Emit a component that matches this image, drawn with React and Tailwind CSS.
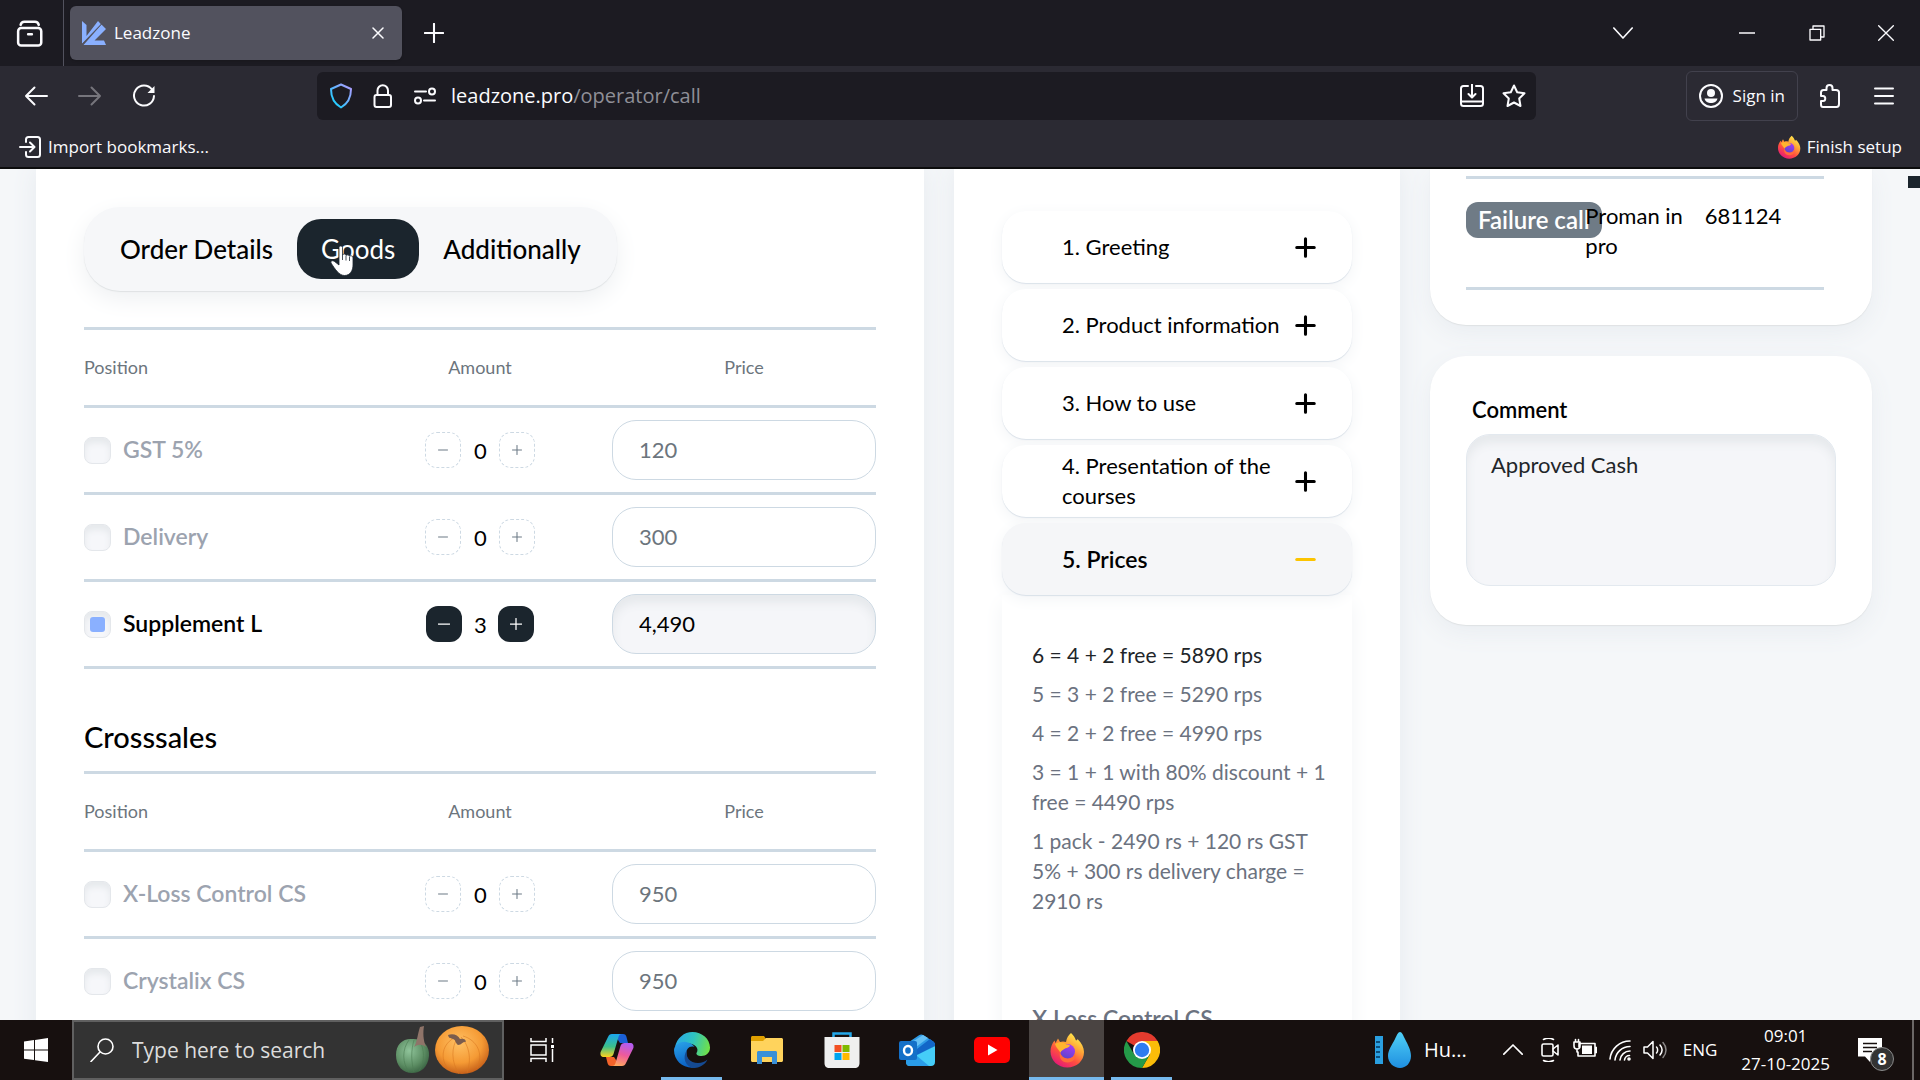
import React from "react";

const goods = [
  { name: "GST 5%", amount: 0, price: "120" },
  { name: "Delivery", amount: 0, price: "300" },
  { name: "Supplement L", amount: 3, price: "4,490" },
];

const crosssales = [
  { name: "X-Loss Control CS", amount: 0, price: "950" },
  { name: "Crystalix CS", amount: 0, price: "950" },
];

const script = [
  "1. Greeting",
  "2. Product information",
  "3. How to use",
  "4. Presentation of the courses",
  "5. Prices",
];

const prices = [
  "5 = 3 + 2 free = 5290 rps",
  "4 = 2 + 2 free = 4990 rps",
  "3 = 1 + 1 with 80% discount + 1 free = 4490 rps",
  "1 pack - 2490 rs + 120 rs GST 5% + 300 rs delivery charge = 2910 rs",
];

/* ---------- icons ---------- */

function Line({ size = 24, width = 2, className = "", children }) {
  return (
    <svg
      width={size}
      height={size}
      viewBox="0 0 24 24"
      fill="none"
      stroke="currentColor"
      strokeWidth={width}
      strokeLinecap="round"
      strokeLinejoin="round"
      className={`shrink-0 ${className}`}
      aria-hidden="true"
    >
      {children}
    </svg>
  );
}

function FirefoxLogo({ size = 24, id }) {
  return (
    <svg width={size} height={size} viewBox="0 0 36 36" className="shrink-0" aria-hidden="true">
      <defs>
        <linearGradient id={`${id}-body`} x1="0.85" y1="0.05" x2="0.25" y2="1">
          <stop offset="0" stopColor="#fff44f" />
          <stop offset="0.35" stopColor="#ffa436" />
          <stop offset="0.65" stopColor="#ff4f3f" />
          <stop offset="1" stopColor="#e2147c" />
        </linearGradient>
        <linearGradient id={`${id}-globe`} x1="0.7" y1="0" x2="0.3" y2="1">
          <stop offset="0" stopColor="#a83bf5" />
          <stop offset="1" stopColor="#5b45c9" />
        </linearGradient>
      </defs>
      <path
        fill={`url(#${id}-body)`}
        d="M22 1c3 2.500 4 5 5 7.500 1-.2 1.500-1 1.500-1.500C32.500 11 35 15.500 35 20c0 9-7.500 15.500-16.700 15.500S1.500 28.500 1.500 19.500c0-4.500 1.700-8 4-11L6.500 11 9 6.500l2 3.500c2-.8 4-.8 6 0 .5-4 2.500-7 5-9z"
      />
      <circle cx="18.500" cy="19.500" r="7.500" fill={`url(#${id}-globe)`} />
      <path
        fill="#ffb52e"
        d="M6 12c4-2.500 8-2 11.500.5 1.500 0 3 .5 3.500 1.200-1 1.800-3 2.300-4.500 2.500-2 1.800-4.500 2-5 4.500-1.800-3-4.500-5-5.500-8.700z"
      />
      <path fill="#ff6b3a" d="M11 20c1 5 6 7.500 10.500 6 2.500-.8 4-2.500 4.500-4.500 1.500 5-2 9-7.500 9S9.500 26 11 20z" />
    </svg>
  );
}

function LeadzoneLogo() {
  return (
    <svg width="24" height="24" viewBox="0 0 24 24" fill="#8ab0ff" className="shrink-0" aria-hidden="true">
      <path d="M0 0l4.500 4v11L16 0l3 3.200L0 23z" />
      <path d="M19.500 3.500L24 8 12.500 19.500 22 19.500 24 24H1.500z" />
      <path d="M0 23L19.500 3" stroke="#52525e" strokeWidth="0.800" />
    </svg>
  );
}

function WindowsLogo() {
  return (
    <svg width="24" height="24" viewBox="0 0 24 24" fill="#fff" aria-hidden="true">
      <path d="M0 3.400l10-1.400v9.600H0zM11 1.900L24 0v11.600H11zM0 12.500h10v9.600L0 20.700zM11 12.500h13V24l-13-1.800z" />
    </svg>
  );
}

function Pumpkins() {
  return (
    <svg width="96" height="50" viewBox="0 0 96 50" className="shrink-0" aria-hidden="true">
      <defs>
        <radialGradient id="gourd" cx="0.4" cy="0.35" r="0.75">
          <stop offset="0" stopColor="#8fc49a" />
          <stop offset="0.6" stopColor="#5c8d63" />
          <stop offset="1" stopColor="#31583a" />
        </radialGradient>
        <radialGradient id="pumpkin" cx="0.45" cy="0.35" r="0.7">
          <stop offset="0" stopColor="#ffc164" />
          <stop offset="0.6" stopColor="#f59a34" />
          <stop offset="1" stopColor="#bc5414" />
        </radialGradient>
      </defs>
      <path d="M2 30C2 19 9 13 19 14c10 0 17 7 16 17-1 11-8 17-17 17S2 41 2 30z" fill="url(#gourd)" />
      <path d="M15 15C8 24 8 38 15 47M20 15c-3 10-3 22 0 32M25 15c6 9 6 22 0 31" stroke="#4c7d54" strokeOpacity="0.6" fill="none" />
      <path d="M20 22c3-4 4-15 6-20l4-1c-1 6-1 14 2 21-4-3-8-3-12 0z" fill="#8f7469" />
      <ellipse cx="68" cy="25" rx="27" ry="24" fill="url(#pumpkin)" />
      <path
        d="M62 12C48 18 45 34 55 45M64 12c-7 10-7 25 1 37M67 12c8 8 11 22 6 36M69 11c14 4 21 18 14 32"
        stroke="#d8771f"
        strokeOpacity="0.55"
        fill="none"
      />
      <path d="M54 10c5-2 10 0 12 4 3-1 6 0 6 3-3-1-4 3-8 3-3-2-2-5-5-6-2-1-4 0-5-4z" fill="#7a5c4d" />
    </svg>
  );
}

function TaskViewIcon() {
  return (
    <svg width="24" height="24" viewBox="0 0 24 24" fill="none" stroke="#fff" strokeWidth="1.500" aria-hidden="true">
      <path d="M1 0v3.500h15V0M1 24v-3.500h15V24M1 7h15v10H1zM22.500 0v5M22.500 11v13" />
      <path d="M21 7h3v3h-3z" fill="#fff" stroke="none" />
    </svg>
  );
}

function CopilotLogo() {
  return (
    <svg width="34" height="32" viewBox="0 0 34 32" aria-hidden="true">
      <defs>
        <linearGradient id="cop-a" x1="0" y1="0" x2="0" y2="1">
          <stop offset="0" stopColor="#1aa7f0" />
          <stop offset="0.55" stopColor="#3cbf8a" />
          <stop offset="1" stopColor="#ffd21e" />
        </linearGradient>
        <linearGradient id="cop-b" x1="0.6" y1="0" x2="0.3" y2="1">
          <stop offset="0" stopColor="#b35cf0" />
          <stop offset="0.5" stopColor="#ee5a9a" />
          <stop offset="1" stopColor="#ffa95e" />
        </linearGradient>
      </defs>
      <path d="M14 0h9c2 0 3 1 3.500 3l1.500 6h-8z" fill="#1b5fd6" />
      <path d="M20 32h-9c-2 0-3-1-3.500-3L6 23h8z" fill="#f4632a" />
      <path d="M8 3c.8-2 2-3 4-3h10c-2 0-3 1-3.500 3l-5 17c-.6 2-2 3-4 3H4c-3 0-4-2-3.400-5z" fill="url(#cop-a)" />
      <path d="M26 29c-.8 2-2 3-4 3H12c2 0 3-1 3.500-3l5-17c.6-2 2-3 4-3H30c3 0 4 2 3.400 5z" fill="url(#cop-b)" />
    </svg>
  );
}

function EdgeLogo() {
  return (
    <svg width="36" height="36" viewBox="0 0 36 36" aria-hidden="true">
      <defs>
        <linearGradient id="edge-a" x1="0" y1="0.3" x2="1" y2="0.5">
          <stop offset="0" stopColor="#2aa8e8" />
          <stop offset="0.5" stopColor="#2fc3c0" />
          <stop offset="1" stopColor="#6fe04a" />
        </linearGradient>
        <linearGradient id="edge-b" x1="0" y1="0" x2="0.3" y2="1">
          <stop offset="0" stopColor="#2aa4ea" />
          <stop offset="1" stopColor="#0c62c4" />
        </linearGradient>
      </defs>
      <path d="M1 15C3 6 10 0 18.500 0 28 0 36 7 36 15.500 36 21 32 24 27.500 24c-4 0-5.500-1.500-5-3 3-4-1-9.500-8-9.500C8 11.500 3 13 1 15z" fill="url(#edge-a)" />
      <path d="M0 18c.5-5 6-9 12-8 4 .5 7 2.500 8.500 5C14 13 11 19 13 25c1.500 5 5 9 10 10C11 38 0 30 0 18z" fill="url(#edge-b)" />
      <path d="M13 18c-2 7 3 13 11 13 4 0 7-1.500 9.500-3.500C31 33 25 36 20 36 11 35 8 25 13 18z" fill="#154a92" />
    </svg>
  );
}

function ExplorerLogo() {
  return (
    <svg width="32" height="28" viewBox="0 0 32 28" aria-hidden="true">
      <path d="M0 1.500C0 .7.700 0 1.500 0H13l2 3v4H0z" fill="#e0a000" />
      <path d="M0 5h12l3-3h15.500c.8 0 1.500.7 1.500 1.500v21c0 .8-.7 1.500-1.500 1.500h-29C.7 26 0 25.300 0 24.500z" fill="#ffd35c" />
      <path d="M6 28V16.500c0-1 .8-1.500 1.500-1.500h17c.8 0 1.500.5 1.500 1.500V28h-5v-7H11v7z" fill="#3a90d8" />
    </svg>
  );
}

function StoreLogo() {
  return (
    <svg width="36" height="36" viewBox="0 0 36 36" aria-hidden="true">
      <path d="M9.500 7V1.500h17V7" fill="none" stroke="#24a8ea" strokeWidth="2.500" />
      <path d="M.5 5h35v26c0 3-1.500 5-5 5h-25c-3.500 0-5-2-5-5z" fill="#efefef" />
      <path d="M10.500 13h7v7h-7z" fill="#f25022" />
      <path d="M18.500 13h7v7h-7z" fill="#7fba00" />
      <path d="M10.500 21h7v7h-7z" fill="#00a4ef" />
      <path d="M18.500 21h7v7h-7z" fill="#ffb900" />
    </svg>
  );
}

function OutlookLogo() {
  return (
    <svg width="36" height="32" viewBox="0 0 36 32" aria-hidden="true">
      <path d="M7 10L20 1.200c1.500-1 3-1 4.500 0L35 8v4L18 22 7 15z" fill="#2f9be6" />
      <path d="M10 10L24 1l5 3-16 12z" fill="#64c0f5" />
      <path d="M14 18L31 5l5 4v3L20 22z" fill="#1266c8" />
      <path d="M36 12v16c0 2.500-1.500 4-4 4H11c-2 0-4-1-4-4l11-7z" fill="#45cdf8" />
      <path d="M7 21l11 1 12 10H11c-2 0-4-1-4-4z" fill="#2a9ce8" />
      <rect y="7" width="18" height="19" rx="2" fill="#1470c8" />
      <ellipse cx="9" cy="16.500" rx="4" ry="4.500" fill="none" stroke="#fff" strokeWidth="2.400" />
    </svg>
  );
}

function YoutubeLogo() {
  return (
    <svg width="36" height="26" viewBox="0 0 36 26" aria-hidden="true">
      <rect width="36" height="26" rx="5" fill="#f00" />
      <path d="M14 7.500v11l9.500-5.500z" fill="#fff" />
    </svg>
  );
}

function ChromeLogo() {
  return (
    <svg width="36" height="36" viewBox="0 0 36 36" aria-hidden="true">
      <path d="M18 18L2.400 9A18 18 0 0 1 33.600 9z" fill="#e33b2e" />
      <path d="M18 9h15.600A18 18 0 0 1 18 36l7.800-13.500z" fill="#fbbc09" />
      <path d="M2.400 9l7.800 13.500L18 27l7.800-4.500L18 36A18 18 0 0 1 2.400 9z" fill="#249a48" />
      <circle cx="18" cy="18" r="9" fill="#fff" />
      <circle cx="18" cy="18" r="7.200" fill="#2f7cf0" />
    </svg>
  );
}

function HandCursor() {
  return (
    <svg width="24" height="32" viewBox="0 0 24 32" aria-hidden="true">
      <path
        d="M9 2.500C9 .5 12.500.5 12.500 2.500V10c.5-1.500 3.300-1.300 3.500.5.800-1.200 3.300-.8 3.500.8 1-1 3.500-.5 3.500 1.500V20c0 5-2.500 10.500-8.500 10.500C9 30.500 5 24 1 18c-.8-2 1.500-3 3.200-1.800L9 20z"
        fill="#fff"
        stroke="#1b252d"
        strokeWidth="0.800"
      />
      <path d="M12.500 10v5M16 11v4.500M19.500 12v4" stroke="#1b252d" strokeWidth="0.800" />
    </svg>
  );
}

/* ---------- browser chrome ---------- */

function TabStrip() {
  return (
    <div className="flex h-[66px] items-center bg-[#1c1b22]">
      <button className="flex w-[63px] justify-center pr-1" aria-label="Recent browsing">
        <Line size={30}>
          <rect x="2.500" y="8" width="18.500" height="14" rx="2.500" />
          <path d="M4.500 5.500c.5-2 1.500-2.500 3-2.500h8.500c1.500 0 2.500.5 3 2.500M10.500 13h3" />
        </Line>
      </button>
      <div className="h-full w-px bg-[#52525e]" />
      <div className="ml-1.5 flex h-[54px] w-[332px] items-center rounded-md bg-[#52525e] px-3 shadow">
        <LeadzoneLogo />
        <span className="ml-2 flex-1 text-[17px]">Leadzone</span>
        <button className="p-1.5" aria-label="Close tab">
          <Line size={12} width={3}>
            <path d="M2 2l20 20M22 2L2 22" />
          </Line>
        </button>
      </div>
      <button className="ml-[18px] p-1" aria-label="New tab">
        <Line size={20} width={2.5}>
          <path d="M12 1v22M1 12h22" />
        </Line>
      </button>
      <div className="ml-auto flex items-center pr-[26px]">
        <button className="mr-[106px]" aria-label="List all tabs">
          <Line size={20}>
            <path d="M1 6l11 12L23 6" />
          </Line>
        </button>
        <button className="mr-[54px]" aria-label="Minimize">
          <Line size={16}>
            <path d="M0 12h24" />
          </Line>
        </button>
        <button className="mr-[53px]" aria-label="Restore">
          <Line size={16}>
            <path d="M1.500 6.500h16v16h-16zM6 6V1.500h16.500V18h-4" />
          </Line>
        </button>
        <button aria-label="Close">
          <Line size={16}>
            <path d="M1 1l22 22M23 1L1 23" />
          </Line>
        </button>
      </div>
    </div>
  );
}

function NavBar() {
  return (
    <div className="flex h-[60px] items-center bg-[#2b2a33] px-6">
      <button aria-label="Back">
        <Line>
          <path d="M2 12h21M10.500 3.500L2 12l8.500 8.500" />
        </Line>
      </button>
      <button className="ml-[30px] text-[#76757c]" aria-label="Forward">
        <Line>
          <path d="M22 12H1M13.500 3.500L22 12l-8.500 8.500" />
        </Line>
      </button>
      <button className="ml-[30px]" aria-label="Reload">
        <Line>
          <path d="M20 5.500A10 10 0 1 0 22 12" />
          <path d="M22.500 2v7h-7z" fill="currentColor" stroke="none" />
        </Line>
      </button>
      <div className="ml-[161px] flex h-12 min-w-0 flex-1 items-center rounded-md bg-[#1c1b22] pr-2.5 pl-3">
        <svg width="24" height="26" viewBox="0 0 24 26" fill="none" aria-hidden="true">
          <defs>
            <linearGradient id="shield" x1="1" y1="0" x2="0" y2="1">
              <stop offset="0" stopColor="#b79bff" />
              <stop offset="0.5" stopColor="#5fb4ff" />
              <stop offset="1" stopColor="#00ddff" />
            </linearGradient>
          </defs>
          <path d="M12 1.500l10 4.500c0 8-3 14.500-10 18.500C5 20.500 2 14 2 6z" stroke="url(#shield)" strokeWidth="2" strokeLinejoin="round" />
        </svg>
        <Line className="ml-[18px]">
          <rect x="3.500" y="11" width="16.500" height="12" rx="2" />
          <path d="M6.500 11V6.500a5.200 5.200 0 0 1 10.500 0V11" />
        </Line>
        <Line className="ml-[18px]">
          <circle cx="19" cy="7.500" r="3" />
          <circle cx="5" cy="16.500" r="3" />
          <path d="M2 7.500h11M11 16.500h11" />
        </Line>
        <label className="relative ml-3.5 flex-1 text-[20px]">
          leadzone.pro<span className="text-[#8f8f97]">/operator/call</span>
          <input type="text" aria-label="Address" className="absolute inset-0 outline-none" />
        </label>
        <button aria-label="Install page">
          <Line>
            <path d="M8 2H3.500C2 2 1 3 1 4.500v15C1 21 2 22 3.500 22h17c1.500 0 2.500-1 2.500-2.500v-15C23 3 22 2 20.500 2H16M1 17.500h22M12 0v13M8.500 10l3.500 3.500L15.500 10" />
          </Line>
        </button>
        <button className="ml-[18px]" aria-label="Bookmark this page">
          <Line>
            <path d="M12 1.500l3.200 6.800 7.300 1-5.300 5.200 1.300 7.500L12 18.500 5.500 22l1.300-7.500L1.500 9.300l7.300-1z" />
          </Line>
        </button>
      </div>
      <button className="ml-[150px] flex h-[50px] items-center gap-2.5 rounded-md border border-[#42414d] px-3 text-[17px]">
        <Line>
          <circle cx="12" cy="12" r="11" />
          <circle cx="12" cy="9" r="4" fill="currentColor" stroke="none" />
          <path d="M5.500 14.500h13c-1 3.500-3.500 4.500-6.500 4.500s-5.500-1-6.500-4.500z" fill="currentColor" stroke="none" />
        </Line>
        Sign in
      </button>
      <button className="ml-5" aria-label="Extensions">
        <Line>
          <path d="M3 8.500c0-1.500 1-2.500 2.500-2.500H8.500V4c0-4 6-4 6 0v2h3.500c2 0 3 1 3 2.500V20c0 2-1 3-2.500 3H5c-1.500 0-2-1-2-2.500V17h2c3 0 3-5 0-5H3z" />
        </Line>
      </button>
      <button className="ml-[30px]" aria-label="Menu">
        <Line>
          <path d="M3 4.500h18M3 12h18M3 19.500h18" />
        </Line>
      </button>
    </div>
  );
}

function BookmarksBar() {
  return (
    <div className="flex h-[43px] items-center justify-between border-b-2 border-[#0c0c0d] bg-[#2b2a33] px-[18px] text-[17px]">
      <button className="flex items-center gap-1.5">
        <Line>
          <path d="M8 7V4.500C8 3 9 2 10.500 2h9C21 2 22 3 22 4.500v15c0 1.500-1 2.500-2.500 2.500h-9C9 22 8 21 8 19.500V17M2 12h14M12 7.500l4.500 4.500-4.500 4.500" />
        </Line>
        Import bookmarks...
      </button>
      <button className="flex items-center gap-1.5">
        <FirefoxLogo id="ff-small" />
        Finish setup
      </button>
    </div>
  );
}

/* ---------- page ---------- */

function Stepper({ name, amount }) {
  const button =
    amount > 0
      ? "bg-[#1b252d] text-white"
      : "border border-dashed border-[#cdd9e3] text-[#6c7a86]";
  const base = "flex size-9 items-center justify-center rounded-xl";
  return (
    <div className={`flex items-center justify-center ${amount > 0 ? "gap-3" : "gap-[13px]"}`}>
      <button className={`${base} ${button}`} aria-label={`Less ${name}`}>
        <Line size={amount > 0 ? 12 : 10} width={2.5}>
          <path d="M1 12h22" />
        </Line>
      </button>
      <span className="w-3 text-center">{amount}</span>
      <button className={`${base} ${button}`} aria-label={`More ${name}`}>
        <Line size={amount > 0 ? 12 : 10} width={2.5}>
          <path d="M12 1v22M1 12h22" />
        </Line>
      </button>
    </div>
  );
}

function GoodsTable({ items }) {
  return (
    <table className="w-full table-fixed border-collapse">
      <thead>
        <tr className="h-[78px] border-y-[3px] border-[#cdd9e3] text-[18px] text-[#6c757d]">
          <th className="text-left font-normal">Position</th>
          <th className="font-normal">Amount</th>
          <th className="font-normal">Price</th>
        </tr>
      </thead>
      <tbody>
        {items.map((item) => {
          const active = item.amount > 0;
          return (
            <tr key={item.name} className="h-[87px] border-b-[3px] border-[#cdd9e3] text-[22px]">
              <td className="p-0">
                <label
                  className={`flex items-center gap-3 text-[23px] leading-7 font-semibold ${
                    active ? "text-black" : "text-[#9ca3af]"
                  }`}
                >
                  <input
                    type="checkbox"
                    defaultChecked={active}
                    className="grid size-[27px] shrink-0 appearance-none place-items-center rounded-lg border border-[#e4e7eb] bg-[#f6f7fa] shadow-[inset_0_5px_6px_#e6e9ec] before:size-[15px] before:rounded-[3px] checked:before:bg-[#8ab0ff]"
                  />
                  <span className="pb-0.5 whitespace-nowrap">{item.name}</span>
                </label>
              </td>
              <td className="p-0">
                <Stepper name={item.name} amount={item.amount} />
              </td>
              <td className="p-0">
                <input
                  type="text"
                  aria-label={`${item.name} price`}
                  defaultValue={item.price}
                  className={`block h-[60px] w-full rounded-3xl border border-[#cdd9e3] px-[26px] pb-0.5 ${
                    active
                      ? "bg-[#f5f6f9] text-black shadow-[inset_0_8px_10px_#e6e9ec]"
                      : "bg-white text-[#6c757d]"
                  }`}
                />
              </td>
            </tr>
          );
        })}
      </tbody>
    </table>
  );
}

function OrderCard() {
  return (
    <section className="bg-white px-12 pt-[38px] shadow-[0_0_24px_#e6eaef]">
      <div className="inline-flex items-center rounded-[36px] bg-[#f6f7f9] p-3 text-[26px] font-medium shadow-[0_1px_1px_#dfe2e4,0_8px_24px_#eef0f2]">
        <button className="h-[60px] px-6">Order Details</button>
        <button className="relative h-[60px] rounded-3xl bg-[#1b252d] px-6 font-normal text-white">
          Goods
          <span className="absolute top-[26px] left-[33px]">
            <HandCursor />
          </span>
        </button>
        <button className="h-[60px] px-6">Additionally</button>
      </div>
      <div className="mt-9">
        <GoodsTable items={goods} />
      </div>
      <h2 className="mt-12 mb-3.5 text-[29px] leading-10 font-medium">Crosssales</h2>
      <GoodsTable items={crosssales} />
    </section>
  );
}

function ScriptCard() {
  return (
    <section className="bg-white px-12 pt-[42px] text-[21px] leading-[30px] shadow-[0_0_24px_#e6eaef]">
      <div className="flex flex-col gap-1.5">
        {script.map((title) => {
          const open = title === "5. Prices";
          return (
            <button
              key={title}
              aria-expanded={open}
              className={`flex h-[72px] items-center justify-between rounded-3xl pr-9 pl-[60px] text-left shadow-[0_1px_1px_#d9e0e8,0_4px_16px_#f2f4f6] ${
                open ? "bg-[#f5f6f8] text-[23px] font-semibold" : "bg-white text-[22px]"
              }`}
            >
              <span>{title}</span>
              <Line size={21} width={3.5} className={open ? "text-[#fcc400]" : ""}>
                <path d={open ? "M2 12h20" : "M12 2v20M2 12h20"} />
              </Line>
            </button>
          );
        })}
      </div>
      <div className="space-y-[9px] pt-[45px] pr-5 pb-8 pl-[30px] text-[#6b7280] shadow-[0_8px_20px_#f2f4f6]">
        <p className="text-[#212529]">6 = 4 + 2 free = 5890 rps</p>
        {prices.map((line) => (
          <p key={line}>{line}</p>
        ))}
        <p className="pt-[78px] text-[23px] font-semibold">X Loss Control CS</p>
      </div>
    </section>
  );
}

function SideColumn() {
  return (
    <div className="flex flex-col gap-[31px] text-[22px] leading-[30px]">
      <section className="rounded-b-[36px] bg-white pt-[7px] pr-12 pb-[35px] pl-9 shadow-[0_1px_1px_#dfe2e4,0_8px_24px_#e9edf1]">
        <table className="w-full table-fixed border-collapse">
          <tbody>
            <tr className="h-[111px] border-y-[3px] border-[#cdd9e3] align-top">
              <td className="px-0 pt-[23px]">
                <span className="inline-block rounded-xl bg-[#6f7b86] px-3 py-[3px] text-[24px] font-semibold whitespace-nowrap text-white">
                  Failure call
                </span>
              </td>
              <td className="relative px-0 pt-[22px]">Proman in pro</td>
              <td className="px-0 pt-[22px]">681124</td>
            </tr>
          </tbody>
        </table>
      </section>
      <section className="rounded-[36px] bg-white px-9 py-[39px] shadow-[0_1px_1px_#dfe2e4,0_8px_24px_#e9edf1]">
        <label htmlFor="comment" className="block pb-[9px] pl-1.5 font-semibold">
          Comment
        </label>
        <textarea
          id="comment"
          defaultValue="Approved Cash"
          className="block h-[152px] w-full resize-none rounded-3xl border border-[#e3e9ef] bg-[#f5f6f9] px-6 py-[15px] text-[#212529] shadow-[inset_0_8px_10px_#e6e9ec]"
        />
      </section>
    </div>
  );
}

/* ---------- taskbar ---------- */

function AppButton({ label, running, active, children }) {
  return (
    <button
      aria-label={label}
      className={`flex h-full w-[75px] items-center justify-center ${active ? "bg-[#4a4442]" : ""}`}
    >
      <span
        className={`flex h-full items-center justify-center ${active ? "w-full" : "w-[61px]"} ${
          running ? "border-y-[3px] border-t-transparent border-b-[#76b9ed]" : ""
        }`}
      >
        {children}
      </span>
    </button>
  );
}

function Taskbar() {
  return (
    <footer className="flex h-[60px] shrink-0 items-center bg-[#17100f] text-white">
      <button className="flex w-[72px] justify-center" aria-label="Start">
        <WindowsLogo />
      </button>
      <label className="flex h-full w-[432px] items-center border-2 border-[#606060] bg-[#333] pr-3 pl-4">
        <Line width={1.6}>
          <circle cx="15.500" cy="8.500" r="7.500" />
          <path d="M10 14L1 23.500" />
        </Line>
        <input
          type="text"
          aria-label="Search"
          placeholder="Type here to search"
          className="ml-[18px] min-w-0 flex-1 pt-0.5 text-[21px] placeholder:text-[#dcdcdc]"
        />
        <Pumpkins />
      </label>
      <AppButton label="Task view">
        <TaskViewIcon />
      </AppButton>
      <AppButton label="Copilot">
        <CopilotLogo />
      </AppButton>
      <AppButton label="Edge" running>
        <EdgeLogo />
      </AppButton>
      <AppButton label="File Explorer">
        <ExplorerLogo />
      </AppButton>
      <AppButton label="Microsoft Store">
        <StoreLogo />
      </AppButton>
      <AppButton label="Outlook">
        <OutlookLogo />
      </AppButton>
      <AppButton label="YouTube">
        <YoutubeLogo />
      </AppButton>
      <AppButton label="Firefox" running active>
        <FirefoxLogo size={36} id="ff-large" />
      </AppButton>
      <AppButton label="Chrome" running>
        <ChromeLogo />
      </AppButton>

      <div className="ml-auto flex h-full items-center text-[17px]">
        <button className="flex items-center gap-3 text-[20px]">
          <svg width="37" height="36" viewBox="0 0 37 36" aria-hidden="true">
            <defs>
              <linearGradient id="drop" x1="0" y1="0" x2="0" y2="1">
                <stop offset="0" stopColor="#4fd0f7" />
                <stop offset="1" stopColor="#1f8fe0" />
              </linearGradient>
            </defs>
            <path d="M0 4h8v28H0z" fill="#2a9fe0" />
            <path d="M1 10h4M1 15h4M1 20h4M1 25h4" stroke="#0b4f7d" strokeWidth="2" />
            <path d="M25 0c2 0 3 3 5 7 3 6 6 11 6 17 0 7-5 12-11 12s-12-5-12-12c0-6 4-11 7-17 2-4 3-7 5-7z" fill="url(#drop)" />
          </svg>
          Hu...
        </button>
        <button className="ml-9" aria-label="Show hidden icons">
          <Line size={20}>
            <path d="M1 17L12 6l11 11" />
          </Line>
        </button>
        <Line width={1.6} className="ml-4">
          <rect x="3" y="6" width="11" height="12" rx="1.500" />
          <path d="M14 11l5-4v10l-5-4M4.500 1.500c3-1.500 7-1.500 10 0M4.500 22.500c3 1.500 7 1.500 10 0" />
        </Line>
        <Line width={1.6} className="ml-2.5">
          <path d="M6 9V5.500h16V18H5v-4M22 9.500h1.500v5H22M1 4h6v4c0 2-1 3-3 3S1 10 1 8zM2.500 1.500V4M5.500 1.500V4M4 11v3" />
          <path d="M9 7.500h10v8.500H9z" fill="currentColor" stroke="none" />
        </Line>
        <Line width={1.6} className="ml-3">
          <path d="M1 21A20 20 0 0 1 21 3M6 22A15 15 0 0 1 21 8.500M11 22a10 10 0 0 1 10-9M15.500 22a5 5 0 0 1 5-4.500" />
          <circle cx="20" cy="21" r="1" fill="currentColor" />
        </Line>
        <Line width={1.500} className="ml-2.5">
          <path d="M1 9h3.500L10 3.500v17L4.500 15H1zM13.500 9c1.500 1.500 1.500 4.500 0 6M17 7c2.500 3 2.500 7 0 10" />
          <path d="M20 4.500c4 4.500 4 10.500 0 15" opacity="0.5" />
        </Line>
        <button className="ml-4">ENG</button>
        <button className="ml-6 text-center leading-[28px]">
          <span className="block">09:01</span>
          <span className="block">27-10-2025</span>
        </button>
        <button className="relative ml-7 h-[30px] w-[54px]" aria-label="8 notifications">
          <svg width="24" height="24" viewBox="0 0 24 24" aria-hidden="true">
            <path d="M0 0h24v18.500H14L12 24 7 18.500H0z" fill="#fff" />
            <path d="M5 5.500h14M5 9.500h14M5 13.500h9" stroke="#17100f" strokeWidth="1.500" />
          </svg>
          <span className="absolute top-3 left-3 flex size-6 items-center justify-center rounded-full border border-[#8a8a8a] bg-[#333] text-[16px] leading-none font-bold">
            8
          </span>
        </button>
        <div className="h-full w-0.5 bg-[#6b6766]" />
        <div className="w-1.5" />
      </div>
    </footer>
  );
}

export default function App() {
  return (
    <div className="flex h-screen flex-col overflow-hidden font-['Open_Sans',sans-serif]">
      <header className="shrink-0 text-[#fbfbfe]">
        <TabStrip />
        <NavBar />
        <BookmarksBar />
      </header>
      <main className="relative min-h-0 flex-1 overflow-hidden bg-[#f5f7f9] font-[Lato,sans-serif] text-black">
        <div className="grid h-full grid-cols-[888fr_446fr_442fr] gap-[30px] pr-12 pl-9">
          <OrderCard />
          <ScriptCard />
          <SideColumn />
        </div>
        <div className="absolute top-[7px] right-0 h-3 w-3 bg-[#1b252d]" />
      </main>
      <Taskbar />
    </div>
  );
}
